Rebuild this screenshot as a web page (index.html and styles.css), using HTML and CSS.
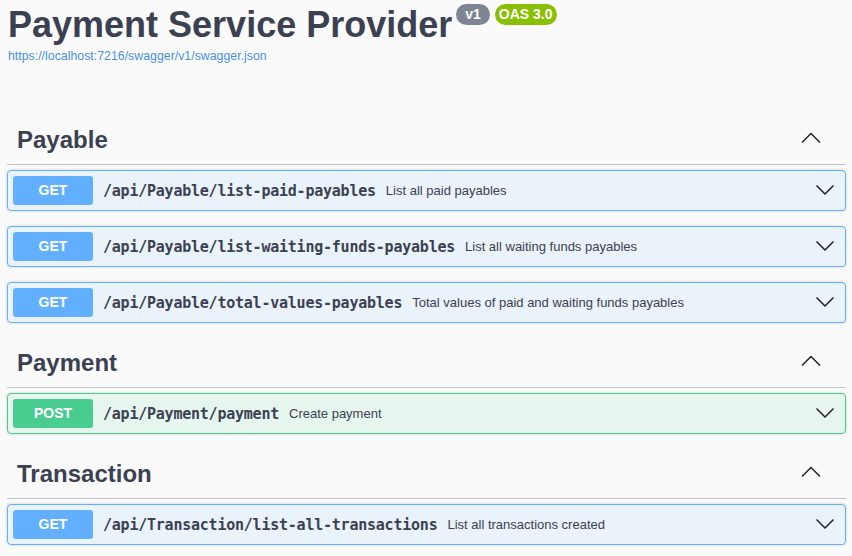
FILE: index.html
```html
<!DOCTYPE html>
<html lang="en">
<head>
<meta charset="utf-8">
<title>Payment Service Provider</title>
<link rel="stylesheet" href="styles.css">
</head>
<body>
<div class="wrapper">
  <div class="info">
    <div class="title-row">
      <h2 class="title">Payment Service Provider</h2>
      <span class="badge badge-version">v1</span>
      <span class="badge badge-oas">OAS 3.0</span>
    </div>
    <a class="url" href="#">https://localhost:7216/swagger/v1/swagger.json</a>
  </div>

  <section class="tag-section">
    <h3 class="tag">
      <span class="tag-name">Payable</span>
      <svg class="arrow-up" width="20" height="20" viewBox="0 0 20 20"><polyline points="1,12.5 10,3.5 19,12.5"/></svg>
    </h3>
    <div class="opblock get">
      <span class="method">GET</span>
      <span class="path">/api/Payable/list-paid-payables</span>
      <span class="desc">List all paid payables</span>
      <svg class="arrow-down" width="18" height="20" viewBox="0 0 18 20"><polyline points="0.5,4.5 9,13 17.5,4.5"/></svg>
    </div>
    <div class="opblock get">
      <span class="method">GET</span>
      <span class="path">/api/Payable/list-waiting-funds-payables</span>
      <span class="desc">List all waiting funds payables</span>
      <svg class="arrow-down" width="18" height="20" viewBox="0 0 18 20"><polyline points="0.5,4.5 9,13 17.5,4.5"/></svg>
    </div>
    <div class="opblock get">
      <span class="method">GET</span>
      <span class="path">/api/Payable/total-values-payables</span>
      <span class="desc">Total values of paid and waiting funds payables</span>
      <svg class="arrow-down" width="18" height="20" viewBox="0 0 18 20"><polyline points="0.5,4.5 9,13 17.5,4.5"/></svg>
    </div>
  </section>

  <section class="tag-section">
    <h3 class="tag">
      <span class="tag-name">Payment</span>
      <svg class="arrow-up" width="20" height="20" viewBox="0 0 20 20"><polyline points="1,12.5 10,3.5 19,12.5"/></svg>
    </h3>
    <div class="opblock post">
      <span class="method">POST</span>
      <span class="path">/api/Payment/payment</span>
      <span class="desc">Create payment</span>
      <svg class="arrow-down" width="18" height="20" viewBox="0 0 18 20"><polyline points="0.5,4.5 9,13 17.5,4.5"/></svg>
    </div>
  </section>

  <section class="tag-section">
    <h3 class="tag">
      <span class="tag-name">Transaction</span>
      <svg class="arrow-up" width="20" height="20" viewBox="0 0 20 20"><polyline points="1,12.5 10,3.5 19,12.5"/></svg>
    </h3>
    <div class="opblock get">
      <span class="method">GET</span>
      <span class="path">/api/Transaction/list-all-transactions</span>
      <span class="desc">List all transactions created</span>
      <svg class="arrow-down" width="18" height="20" viewBox="0 0 18 20"><polyline points="0.5,4.5 9,13 17.5,4.5"/></svg>
    </div>
  </section>
</div>
</body>
</html>
```

FILE: styles.css
```css
* { box-sizing: border-box; }
html, body {
  margin: 0;
  padding: 0;
  background: #fafafa;
  font-family: "Liberation Sans", Arial, sans-serif;
  color: #3b4151;
  overflow: hidden;
}
.wrapper {
  padding: 0 6px 0 7px;
}
.info {
  padding: 4px 0 0 1px;
  margin-bottom: 52px;
}
.title-row {
  display: flex;
  align-items: flex-start;
}
.title {
  margin: 0;
  font-size: 36px;
  line-height: 41px;
  font-weight: bold;
  color: #3b4151;
}
.badge {
  display: inline-block;
  color: #fff;
  font-weight: bold;
  font-size: 14px;
  line-height: 17px;
  padding: 2px 4px;
  border-radius: 57px;
  margin-left: 5px;
}
.badge-version {
  background: #7d8492;
  padding: 2px 9px;
  margin-left: 4px;
}
.badge-oas {
  background: #89bf04;
}
.url {
  display: block;
  margin-top: 4px;
  font-size: 12.35px;
  line-height: 14px;
  color: #4990e2;
  text-decoration: none;
}
.tag {
  margin: 0 0 5px;
  display: flex;
  align-items: center;
  justify-content: space-between;
  padding: 10px 25px 10px 10px;
  border-bottom: 1px solid rgba(59, 65, 81, 0.3);
  font-size: 24px;
  line-height: 29px;
  font-weight: bold;
  color: #3b4151;
}
.arrow-up polyline,
.arrow-down polyline {
  fill: none;
  stroke: #222;
  stroke-width: 1.5;
}
.opblock {
  display: flex;
  align-items: center;
  padding: 5px 11px 5px 5px;
  margin-bottom: 15px;
  border: 1px solid #61affe;
  border-radius: 4px;
  background: rgba(97, 175, 254, 0.1);
  box-shadow: 0 0 3px rgba(0, 0, 0, 0.19);
}
.opblock.post {
  border-color: #49cc90;
  background: rgba(73, 204, 144, 0.1);
}
.method {
  width: 80px;
  flex: none;
  padding: 6px 0;
  border-radius: 3px;
  background: #61affe;
  color: #fff;
  font-weight: bold;
  font-size: 14px;
  line-height: 17px;
  text-align: center;
}
.post .method {
  background: #49cc90;
}
.path {
  padding: 0 10px;
  font-family: "DejaVu Sans Mono", monospace;
  font-weight: bold;
  font-size: 15px;
  letter-spacing: -0.23px;
  color: #3b4151;
}
.desc {
  flex: 1;
  font-size: 13px;
  color: #3b4151;
}
.arrow-down {
  flex: none;
}
```
